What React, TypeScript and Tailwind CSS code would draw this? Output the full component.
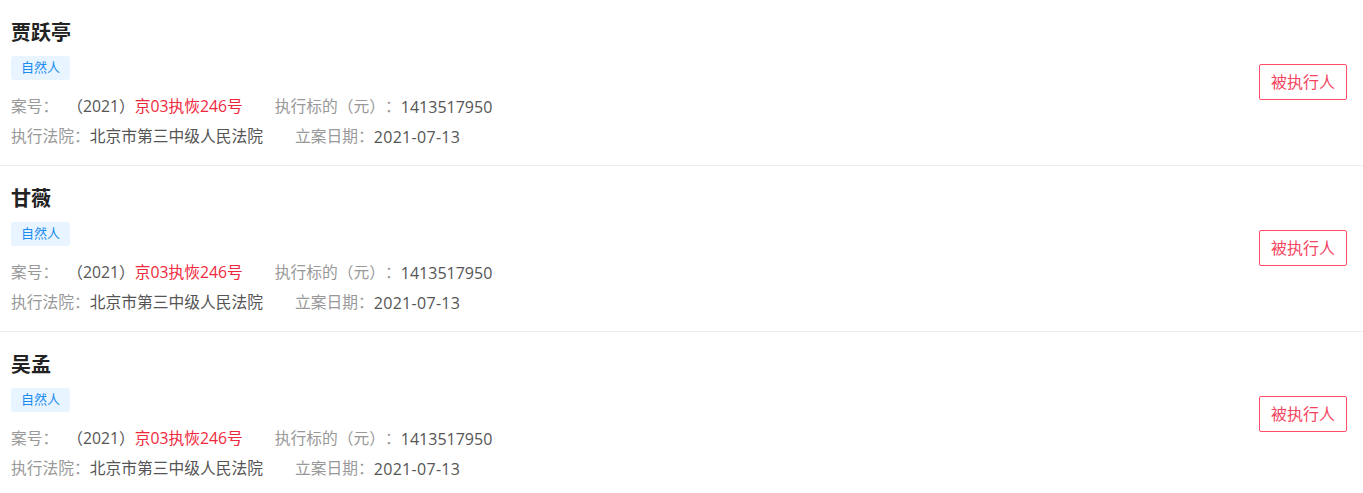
import React from "react";

const rows = [
  { name: "贾跃亭" },
  { name: "甘薇" },
  { name: "吴孟" },
];

function Row({ name }: { name: string }) {
  return (
    <div className="flex items-start border-b border-[#ececec] pl-[11px] pr-4 pt-[19px] pb-[13px]">
      <div className="flex-1">
        <div className="h-[28px] text-[20px] font-bold leading-[28px] text-[#222]">{name}</div>
        <div className="mt-[9px] flex">
          <span className="flex h-6 items-center rounded-[3px] bg-[#e8f4ff] px-[10px] text-[13px] text-[#1a8cf0]">自然人</span>
        </div>
        <div className="mt-3 flex h-[30px] items-center text-[15.75px]">
          <span className="text-[#999]">案号：</span>
          <span className="ml-[9px] text-[#555]">（2021）</span>
          <span className="text-[#f0283c]">京03执恢246号</span>
          <span className="ml-8 text-[#999]">执行标的（元）：</span>
          <span className="text-[16px] text-[#555]">1413517950</span>
        </div>
        <div className="flex h-[30px] items-center text-[15.75px]">
          <span className="text-[#999]">执行法院：</span>
          <span className="text-[#555]">北京市第三中级人民法院</span>
          <span className="ml-8 text-[#999]">立案日期：</span>
          <span className="text-[16px] tracking-[0.3px] text-[#555]">2021-07-13</span>
        </div>
      </div>
      <button className="mt-[45px] flex h-9 w-[88px] items-center justify-center rounded-[2px] border border-[#ff4d6a] text-[16px] text-[#f5455f]">
        被执行人
      </button>
    </div>
  );
}

export default function App() {
  return (
    <div
      className="min-h-screen bg-white [text-spacing-trim:space-all]"
      style={{ fontFamily: '"Open Sans", "Noto Sans CJK SC", sans-serif' }}
    >
      {rows.map((r) => (
        <Row key={r.name} name={r.name} />
      ))}
    </div>
  );
}
